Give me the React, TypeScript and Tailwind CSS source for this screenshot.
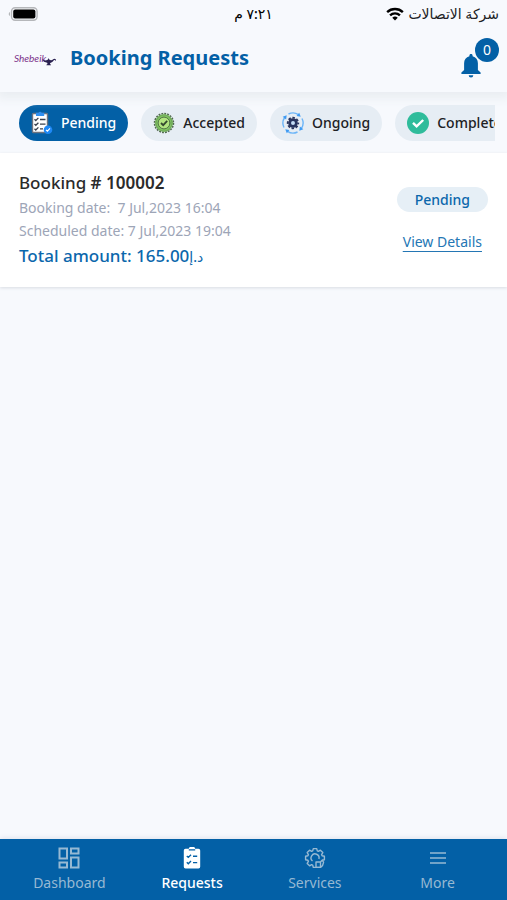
import React, { useState } from 'react';
import clsx from 'clsx';

type IconProps = { className?: string };

function BatteryIcon() {
  return (
    <svg width="30" height="14" viewBox="0 0 30 14" aria-hidden="true">
      <path d="M2 5v4a2.2 2.2 0 0 1 0-4z" fill="#b5b7ba" />
      <rect x="3.5" y="0.8" width="25.6" height="12.4" rx="3.6" fill="#f7f8fb" stroke="#b5b7ba" strokeWidth="1.4" />
      <rect x="5.2" y="2.4" width="22.2" height="9.2" rx="2" fill="#000" />
    </svg>
  );
}

function WifiIcon() {
  return (
    <svg width="18" height="14" viewBox="0 0 19 14" fill="none" stroke="#000" strokeWidth="2.5" aria-hidden="true">
      <path d="M1.2 5.1a12 12 0 0 1 16.6 0" />
      <path d="M4.3 8.4a7.5 7.5 0 0 1 10.4 0" />
      <path d="M9.5 13.8 6.6 10.9a4.2 4.2 0 0 1 5.8 0z" fill="#000" stroke="none" />
    </svg>
  );
}

function LampIcon({ className }: IconProps) {
  return (
    <svg className={className} width="14" height="9" viewBox="0 0 14 9" aria-hidden="true">
      <path d="M0 2.4c1.6 1 3 1.1 4.6.9L6 2.400l.6-1.400.6 1.400 1.600.8c1 .1 1.700-.3 2.300-.9.9-.8 2-.8 2.600 0 .5.700.2 1.400-.3 1.600 0-.8-.5-1.200-1.100-.9-1 .6-1.600 2.300-4 2.900l-.4 1.100 1.100.8v.5H4.400v-.5l1.100-.8-.3-1.200C3 5.200 1 4.200 0 2.400z" fill="#2a2150" />
    </svg>
  );
}

function BellIcon() {
  return (
    <svg width="20" height="24" viewBox="0 0 20 24" fill="#0360a6" aria-hidden="true">
      <path d="M10 0c1 0 1.6.7 1.6 1.7v.5c3.3.8 5.3 3.400 5.300 7v6.800l2.700 2.500v1.500H.4v-1.500l2.700-2.500V9.200c0-3.600 2-6.200 5.300-7v-.5C8.400.7 9 0 10 0z" />
      <path d="M7.700 21.200h4.600a2.300 2.300 0 0 1-4.600 0z" />
    </svg>
  );
}

function PendingIcon() {
  return (
    <svg width="22" height="24" viewBox="0 0 22 24" aria-hidden="true">
      <rect x="1.5" y="2.5" width="15" height="19" rx="1" fill="#fff" stroke="#6e7480" strokeWidth="1.4" />
      <path d="M5 1.8h2.500a1.800 1.800 0 0 1 3.200 0h2.500V5H5z" fill="#2f8ff0" />
      <g fill="none" stroke="#39404d" strokeWidth="1.3">
        <path d="m3.5 8.200 1.300 1.300 2.600-2.600M3.500 13l1.300 1.300 2.600-2.600M3.500 17.700 4.800 19l2.600-2.600" />
        <path d="M9 8.500h5.500M9 13.200h5.500M9 17.900h3" />
      </g>
      <circle cx="17" cy="18.7" r="4.3" fill="#1e88f5" />
      <path d="m15 18.800 1.400 1.400 2.600-2.800" fill="none" stroke="#fff" strokeWidth="1.1" />
    </svg>
  );
}

function AcceptedIcon() {
  return (
    <svg width="22" height="22" viewBox="0 0 22 22" aria-hidden="true">
      <circle cx="11" cy="11" r="9" fill="#82c763" />
      <circle cx="11" cy="11" r="9.5" fill="none" stroke="#51694f" strokeWidth="1.500" strokeDasharray="1.9 1.084" />
      <circle cx="11" cy="11" r="8" fill="none" stroke="#70a95a" strokeWidth="1.2" />
      <circle cx="11" cy="11" r="5.9" fill="#b2e581" stroke="#47683f" strokeWidth="0.9" />
      <path d="m8 11 2.200 2.200 4-4.300" fill="none" stroke="#34492f" strokeWidth="1.8" />
    </svg>
  );
}

function OngoingIcon() {
  return (
    <svg width="22" height="22" viewBox="1 1 22 22" aria-hidden="true">
      <g fill="none" stroke="#6cb5f8" strokeWidth="1.4">
        <path d="M7.500 3A10 10 0 0 1 17.500 3.600" />
        <path d="M21 7.500A10 10 0 0 1 20.400 17.500" />
        <path d="M16.500 21A10 10 0 0 1 6.500 20.400" />
        <path d="M3 16.500A10 10 0 0 1 3.600 6.500" />
      </g>
      <g fill="#3f9af2">
        <path d="m18.200 1.700 1.500 4-4.100-.6z" />
        <path d="m22.300 18.200-4 1.500.6-4.100z" />
        <path d="m5.800 22.300-1.500-4 4.100.6z" />
        <path d="m1.700 5.800 4-1.500-.6 4.100z" />
      </g>
      <circle cx="12" cy="12" r="3.4" fill="#c4dcf5" stroke="#28345e" strokeWidth="2.800" />
      <circle cx="12" cy="12" r="5.3" fill="none" stroke="#28345e" strokeWidth="1.800" strokeDasharray="2.500 1.663" strokeDashoffset="1.25" />
    </svg>
  );
}

function CompletedIcon() {
  return (
    <svg width="22" height="22" viewBox="0 0 22 22" aria-hidden="true">
      <circle cx="11" cy="11" r="11" fill="#2fbc9b" />
      <path d="m6 10.800 3.600 3.600L16.200 8" fill="none" stroke="#fff" strokeWidth="2.4" />
    </svg>
  );
}

function DashboardIcon() {
  return (
    <svg width="22" height="22" viewBox="0 0 22 22" fill="none" stroke="currentColor" strokeWidth="2" aria-hidden="true">
      <rect x="1.5" y="1.5" width="7.5" height="10" />
      <rect x="13" y="1.5" width="7.5" height="5" />
      <rect x="1.5" y="15.5" width="7.5" height="5" />
      <rect x="13" y="10.5" width="7.5" height="10" />
    </svg>
  );
}

function RequestsIcon() {
  return (
    <svg width="22" height="22" viewBox="0 0 22 22" aria-hidden="true">
      <path d="M4.500 1.800h3.300a3.300 3.300 0 0 1 6.400 0h3.300a1.700 1.700 0 0 1 1.700 1.700v16.300a1.700 1.700 0 0 1-1.700 1.700h-13a1.700 1.700 0 0 1-1.700-1.700V3.500a1.700 1.700 0 0 1 1.700-1.700z" fill="currentColor" />
      <path d="M7.800 2.900h6.400M5.800 9l1.500 1.400L10 7.700M5.800 15.300l1.500 1.400L10 14M12 9.300h4.200M12 15.600h4.200" fill="none" stroke="#0360a6" strokeWidth="1.4" />
    </svg>
  );
}

function ServicesIcon() {
  return (
    <svg width="22" height="22" viewBox="0 0 22 22" fill="none" stroke="currentColor" strokeWidth="1.4" strokeLinejoin="round" aria-hidden="true">
      <path d="M18.100 13.300 20.400 12.700V9.300L18.100 8.700 17.600 7.600 18.800 5.600 16.400 3.200 14.400 4.400 13.300 3.900 12.700 1.600H9.300L8.700 3.900 7.600 4.400 5.600 3.200 3.200 5.600 4.400 7.600 3.900 8.700 1.600 9.300V12.700L3.900 13.300 4.400 14.400 3.200 16.400 5.600 18.800 7.600 17.600 8.700 18.100 9.300 20.400H16.500" />
      <path d="M8.500 14a4 4 0 1 1 6.400-2" />
      <path d="M12 15h4.500v5.400H12zM16.500 15l1.600-1.700 1.500 1.800-1 3.300-2.100 2" />
    </svg>
  );
}

function MoreIcon() {
  return (
    <svg width="22" height="22" viewBox="0 0 22 22" stroke="currentColor" strokeWidth="1.5" aria-hidden="true">
      <path d="M3 6h16M3 11h16M3 16h16" />
    </svg>
  );
}

const filters = [
  { label: 'Pending', icon: PendingIcon },
  { label: 'Accepted', icon: AcceptedIcon },
  { label: 'Ongoing', icon: OngoingIcon },
  { label: 'Completed', icon: CompletedIcon },
];

const navItems = [
  { label: 'Dashboard', icon: DashboardIcon },
  { label: 'Requests', icon: RequestsIcon },
  { label: 'Services', icon: ServicesIcon },
  { label: 'More', icon: MoreIcon },
];

const bookings = [
  { id: '100002', date: '7 Jul,2023 16:04', scheduled: '7 Jul,2023 19:04', amount: '165.00', currency: 'د.إ', status: 'Pending' },
];

function StatusBar() {
  return (
    <div dir="rtl" className="grid h-7 grid-cols-3 items-center px-2 text-sm text-[#202124]">
      <div className="flex items-center gap-1 whitespace-nowrap">
        <span>شركة الاتصالات</span>
        <WifiIcon />
      </div>
      <span className="text-center font-medium text-black">٧:٢١ م</span>
      <div className="flex justify-end">
        <BatteryIcon />
      </div>
    </div>
  );
}

export default function App() {
  const [filter, setFilter] = useState('Pending');
  const [tab, setTab] = useState('Requests');

  return (
    <div className="flex min-h-screen flex-col bg-[#f7f9fd] font-['Noto_Sans','DejaVu_Sans',sans-serif]">
      <header className="relative shadow-[0_3px_10px_3px_#e9edf1]">
        <StatusBar />
        <div className="flex h-16 items-center px-2 pb-1 pl-3.5">
          <div className="flex w-14 items-end">
            <span className="font-['Lato',sans-serif] text-[10px] leading-4 text-[#7b3089] italic">Shebeik</span>
            <LampIcon className="-ml-1 shrink-0" />
          </div>
          <h1 className="flex-1 text-xl font-bold text-[#0360a6]">Booking Requests</h1>
          <button type="button" aria-label="Notifications" className="relative flex h-10 w-[38px] items-end">
            <BellIcon />
            <span className="absolute top-0 right-0 flex size-6 items-center justify-center rounded-full bg-[#0360a6] text-sm text-white">
              0
            </span>
          </button>
        </div>
      </header>

      <main className="flex-1">
        <div className="mr-3 ml-[19px] flex gap-[13px] overflow-hidden pt-[13px] pb-3">
          {filters.map((f) => (
            <button
              key={f.label}
              type="button"
              aria-pressed={filter === f.label}
              onClick={() => setFilter(f.label)}
              className={clsx(
                'flex h-9 shrink-0 items-center gap-2 rounded-full px-3 text-sm font-medium',
                filter === f.label ? 'bg-[#0360a6] text-white' : 'bg-[#e6edf4] text-[#202124]'
              )}
            >
              <f.icon />
              {f.label}
            </button>
          ))}
        </div>

        {bookings.map((b) => (
          <article key={b.id} className="flex items-center justify-between bg-white px-[19px] pt-4 pb-[17px] shadow-[0_1px_3px_#d8dce2]">
            <div>
              <h2 className="text-[17px] leading-[27px] font-medium text-[#2b2b2b]">
                Booking <span className="font-semibold"># {b.id}</span>
              </h2>
              <p className="text-sm leading-[23px] text-[#9da5b7]">Booking date: &nbsp;{b.date}</p>
              <p className="text-sm leading-[23px] text-[#9da5b7]">Scheduled date: {b.scheduled}</p>
              <p className="text-[17px] leading-7 font-medium text-[#0b67ac]">
                Total amount: {b.amount}
                <span dir="rtl" className="inline-block text-sm leading-5">{b.currency}</span>
              </p>
            </div>
            <div className="flex flex-col items-center gap-5">
              <span className="rounded-full bg-[#e6eff6] px-[18px] text-sm leading-[25px] font-medium text-[#0b67ac]">{b.status}</span>
              <a href="#details" className="text-sm text-[#2476b4] underline underline-offset-4">View Details</a>
            </div>
          </article>
        ))}
      </main>

      <nav className="grid grid-cols-4 bg-[#0360a6] px-2 pt-2 pb-[7px] shadow-[0_-1px_5px_#dfe3ed]">
        {navItems.map((item) => (
          <button
            key={item.label}
            type="button"
            onClick={() => setTab(item.label)}
            className={clsx(
              'flex flex-col items-center gap-1 text-sm',
              tab === item.label ? 'font-medium text-white' : 'text-[#97b9d3]'
            )}
          >
            <item.icon />
            {item.label}
          </button>
        ))}
      </nav>
    </div>
  );
}
